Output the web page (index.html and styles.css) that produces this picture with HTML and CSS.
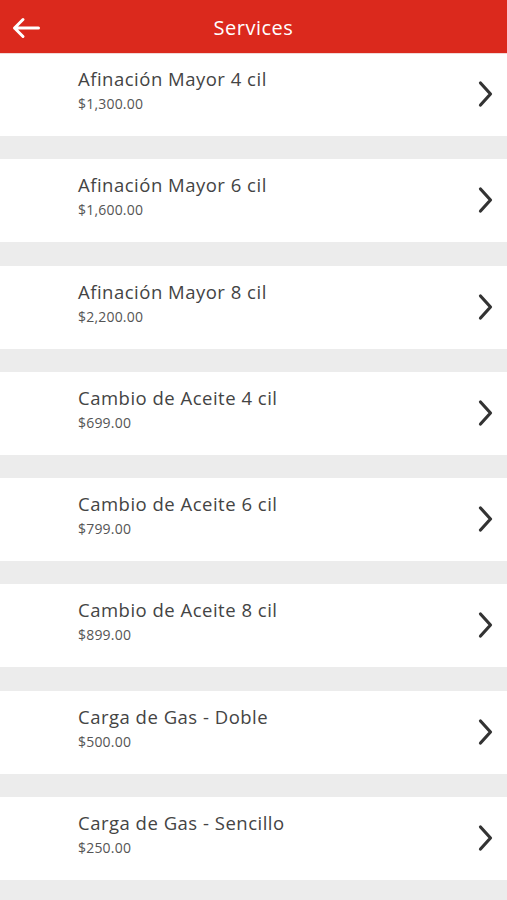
FILE: index.html
```html
<!DOCTYPE html>
<html lang="en">
<head>
    <meta charset="UTF-8">
    <meta name="viewport" content="width=device-width, initial-scale=1.0">
    <title>Services</title>
    <link rel="stylesheet" href="styles.css">
</head>
<body>
    <header class="top-bar">
        <button class="back-btn" aria-label="Back">
            <svg width="30" height="22" viewBox="0 0 30 22">
                <path d="M27.5 11H3.5M12 2.5L3.5 11l8.5 8.5" fill="none" stroke="#fff" stroke-width="3" stroke-linecap="round" stroke-linejoin="round"/>
            </svg>
        </button>
        <div class="top-title">Services</div>
    </header>

    <ul class="service-list">
        <li class="service">
            <div class="service-info">
                <div class="service-name">Afinación Mayor 4 cil</div>
                <div class="service-price">$1,300.00</div>
            </div>
            <svg class="chevron" width="18" height="28" viewBox="0 0 18 28"><path d="M3.5 3L13.5 14 3.5 25" fill="none" stroke="#333" stroke-width="3.2" stroke-linecap="round" stroke-linejoin="round"/></svg>
        </li>
        <li class="service">
            <div class="service-info">
                <div class="service-name">Afinación Mayor 6 cil</div>
                <div class="service-price">$1,600.00</div>
            </div>
            <svg class="chevron" width="18" height="28" viewBox="0 0 18 28"><path d="M3.5 3L13.5 14 3.5 25" fill="none" stroke="#333" stroke-width="3.2" stroke-linecap="round" stroke-linejoin="round"/></svg>
        </li>
        <li class="service">
            <div class="service-info">
                <div class="service-name">Afinación Mayor 8 cil</div>
                <div class="service-price">$2,200.00</div>
            </div>
            <svg class="chevron" width="18" height="28" viewBox="0 0 18 28"><path d="M3.5 3L13.5 14 3.5 25" fill="none" stroke="#333" stroke-width="3.2" stroke-linecap="round" stroke-linejoin="round"/></svg>
        </li>
        <li class="service">
            <div class="service-info">
                <div class="service-name">Cambio de Aceite 4 cil</div>
                <div class="service-price">$699.00</div>
            </div>
            <svg class="chevron" width="18" height="28" viewBox="0 0 18 28"><path d="M3.5 3L13.5 14 3.5 25" fill="none" stroke="#333" stroke-width="3.2" stroke-linecap="round" stroke-linejoin="round"/></svg>
        </li>
        <li class="service">
            <div class="service-info">
                <div class="service-name">Cambio de Aceite 6 cil</div>
                <div class="service-price">$799.00</div>
            </div>
            <svg class="chevron" width="18" height="28" viewBox="0 0 18 28"><path d="M3.5 3L13.5 14 3.5 25" fill="none" stroke="#333" stroke-width="3.2" stroke-linecap="round" stroke-linejoin="round"/></svg>
        </li>
        <li class="service">
            <div class="service-info">
                <div class="service-name">Cambio de Aceite 8 cil</div>
                <div class="service-price">$899.00</div>
            </div>
            <svg class="chevron" width="18" height="28" viewBox="0 0 18 28"><path d="M3.5 3L13.5 14 3.5 25" fill="none" stroke="#333" stroke-width="3.2" stroke-linecap="round" stroke-linejoin="round"/></svg>
        </li>
        <li class="service">
            <div class="service-info">
                <div class="service-name">Carga de Gas - Doble</div>
                <div class="service-price">$500.00</div>
            </div>
            <svg class="chevron" width="18" height="28" viewBox="0 0 18 28"><path d="M3.5 3L13.5 14 3.5 25" fill="none" stroke="#333" stroke-width="3.2" stroke-linecap="round" stroke-linejoin="round"/></svg>
        </li>
        <li class="service">
            <div class="service-info">
                <div class="service-name">Carga de Gas - Sencillo</div>
                <div class="service-price">$250.00</div>
            </div>
            <svg class="chevron" width="18" height="28" viewBox="0 0 18 28"><path d="M3.5 3L13.5 14 3.5 25" fill="none" stroke="#333" stroke-width="3.2" stroke-linecap="round" stroke-linejoin="round"/></svg>
        </li>
    </ul>
</body>
</html>
```

FILE: styles.css
```css
body {
    margin: 0;
    padding: 0;
    background-color: #ececec;
    font-family: "Open Sans", "Noto Sans", sans-serif;
    height: 900px;
    overflow: hidden;
}

.top-bar {
    position: relative;
    z-index: 1;
    height: 53px;
    background-color: #db291d;
    display: flex;
    align-items: center;
    justify-content: center;
    border-bottom: 1px solid #f2d8d6;
}

.back-btn {
    position: absolute;
    left: 11px;
    top: 17px;
    background: none;
    border: none;
    padding: 0;
    display: flex;
}

.top-title {
    color: #ffffff;
    font-size: 20px;
    letter-spacing: 0.5px;
    margin-top: 1px;
}

.service-list {
    list-style: none;
    margin: -1px 0 0;
    padding: 0;
}

.service {
    height: 83px;
    margin-bottom: 23.3px;
    background: #ffffff;
    display: flex;
    align-items: center;
    padding: 0 12px 0 78px;
    box-sizing: border-box;
}

.service-info {
    flex: 1;
    align-self: flex-start;
    padding-top: 14px;
}

.service-name {
    font-size: 18.5px;
    letter-spacing: 0.5px;
    color: #444444;
    line-height: 24px;
}

.service-price {
    font-size: 14px;
    letter-spacing: 0.2px;
    color: #555555;
    line-height: 20px;
    margin-top: 3px;
}

.chevron {
    display: block;
    margin-top: -1px;
}
```
